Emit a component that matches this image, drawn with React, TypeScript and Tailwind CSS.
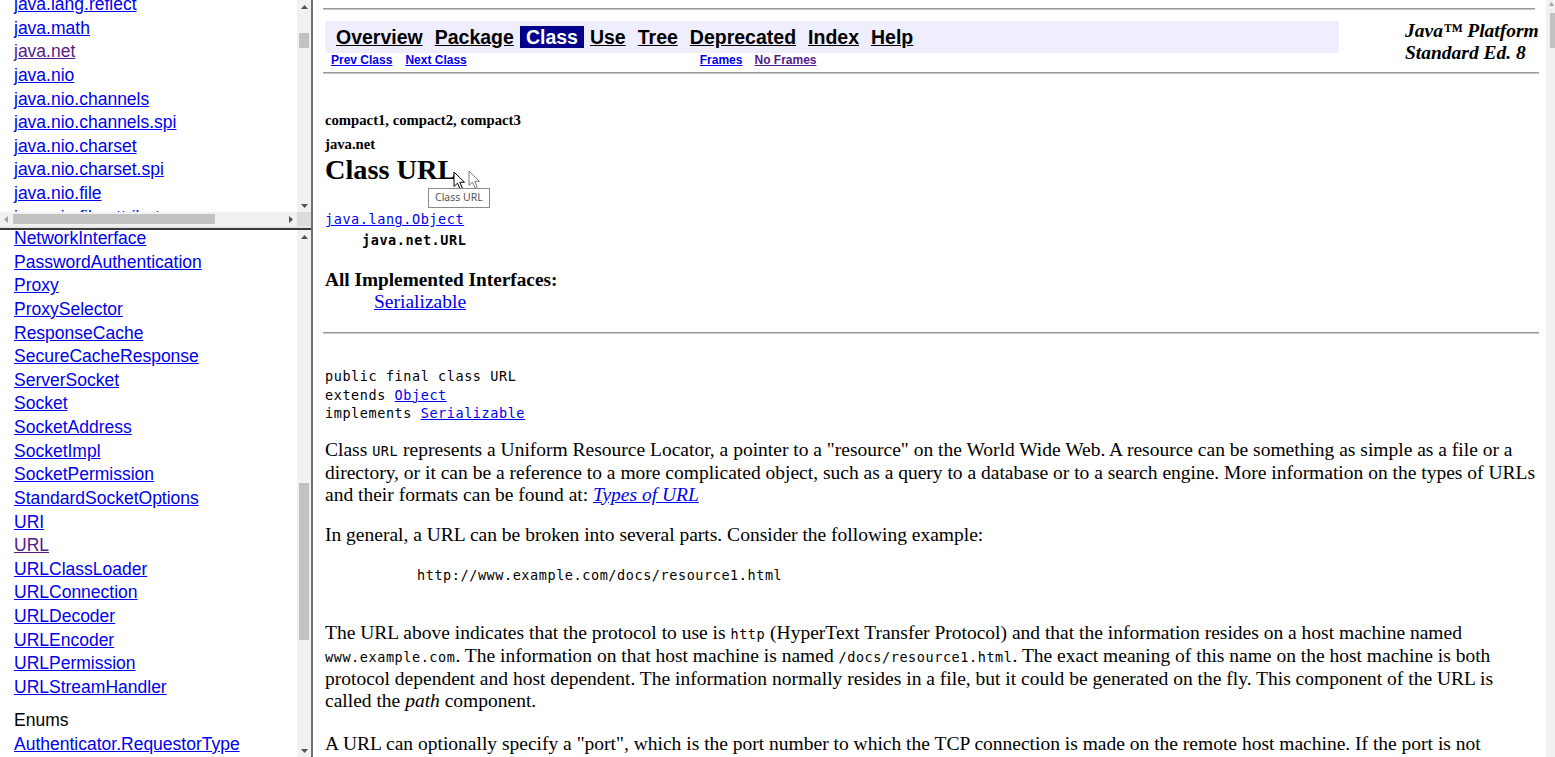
import React from "react";

const SANS = "font-['Liberation_Sans',Arial,sans-serif]";
const SERIF = "font-['Liberation_Serif','Times_New_Roman',serif]";
const MONO = "font-['DejaVu_Sans_Mono',monospace] text-[13.5px] tracking-[0.57px]";

function Tri({ dir, light }: { dir: "up" | "down" | "left" | "right"; light?: boolean }) {
  const fill = light ? "#a3a3a3" : "#505050";
  const pts: Record<string, string> = {
    up: "0,4 7,4 3.5,0",
    down: "0,0 7,0 3.5,4",
    left: "4,0 4,7 0,3.5",
    right: "0,0 0,7 4,3.5",
  };
  const vertical = dir === "up" || dir === "down";
  return (
    <svg width={vertical ? 7 : 4} height={vertical ? 4 : 7} viewBox={vertical ? "0 0 7 4" : "0 0 4 7"}>
      <polygon points={pts[dir]} fill={fill} />
    </svg>
  );
}

function VScroll({ thumbTop, thumbH }: { thumbTop: number; thumbH: number }) {
  return (
    <div className="relative flex h-full w-[14px] shrink-0 flex-col bg-[#f1f1f1]">
      <div className="flex h-[13px] items-center justify-center">
        <Tri dir="up" />
      </div>
      <div className="flex-1" />
      <div className="flex h-[13px] items-center justify-center">
        <Tri dir="down" />
      </div>
      <div
        className="absolute left-[2px] w-[10px] bg-[#c1c1c1]"
        style={{ top: thumbTop, height: thumbH }}
      />
    </div>
  );
}

const topPkgs: { t: string; v?: boolean }[] = [
  { t: "java.lang.reflect" },
  { t: "java.math" },
  { t: "java.net", v: true },
  { t: "java.nio" },
  { t: "java.nio.channels" },
  { t: "java.nio.channels.spi" },
  { t: "java.nio.charset" },
  { t: "java.nio.charset.spi" },
  { t: "java.nio.file" },
  { t: "java.nio.file.attribute" },
];

const classes: { t: string; v?: boolean }[] = [
  { t: "NetworkInterface" },
  { t: "PasswordAuthentication" },
  { t: "Proxy" },
  { t: "ProxySelector" },
  { t: "ResponseCache" },
  { t: "SecureCacheResponse" },
  { t: "ServerSocket" },
  { t: "Socket" },
  { t: "SocketAddress" },
  { t: "SocketImpl" },
  { t: "SocketPermission" },
  { t: "StandardSocketOptions" },
  { t: "URI" },
  { t: "URL", v: true },
  { t: "URLClassLoader" },
  { t: "URLConnection" },
  { t: "URLDecoder" },
  { t: "URLEncoder" },
  { t: "URLPermission" },
  { t: "URLStreamHandler" },
];

function LeftLink({ t, v }: { t: string; v?: boolean }) {
  return (
    <div className="h-[23.63px] whitespace-nowrap leading-[23.63px]">
      <a className={`underline ${v ? "text-[#551a8b]" : "text-[#0000ee]"}`}>{t}</a>
    </div>
  );
}

function Cursor({ ghost }: { ghost?: boolean }) {
  return (
    <svg width="13" height="19" viewBox="0 0 13 19">
      <path
        d="M1 1 L1 15.5 L4.5 12.2 L7 17.8 L9.2 16.8 L6.8 11.3 L11.5 11.3 Z"
        fill="#fff"
        stroke={ghost ? "#7a7a7a" : "#000"}
        strokeWidth="1"
        strokeLinejoin="round"
      />
    </svg>
  );
}

export default function App() {
  const navItems = ["Overview", "Package", "Class", "Use", "Tree", "Deprecated", "Index", "Help"];
  return (
    <div className="flex h-[757px] w-[1555px] overflow-hidden bg-white text-black">
      {/* Left frames */}
      <div className={`flex w-[311px] shrink-0 flex-col ${SANS} text-[17.5px]`}>
        <div className="flex h-[212px]">
          <div className="flex-1 overflow-hidden pl-[14px]">
            <div className="-mt-[7px]">
              {topPkgs.map((p) => (
                <LeftLink key={p.t} t={p.t} v={p.v} />
              ))}
            </div>
          </div>
          <VScroll thumbTop={33} thumbH={15} />
        </div>
        <div className="flex h-[14px]">
          <div className="relative flex flex-1 items-center justify-between bg-[#f1f1f1] px-[4px]">
            <Tri dir="left" light />
            <Tri dir="right" />
            <div className="absolute left-[13px] top-[2px] h-[10px] w-[202px] bg-[#c1c1c1]" />
          </div>
          <div className="w-[14px] bg-[#dcdcdc]" />
        </div>
        <div className="h-[2px] bg-[#e6e6e6]" />
        <div className="h-[2px] bg-[#3a3a3a]" />
        <div className="flex min-h-0 flex-1">
          <div className="flex-1 overflow-hidden pl-[14px]">
            <div className="-mt-[3px]">
              {classes.map((p) => (
                <LeftLink key={p.t} t={p.t} v={p.v} />
              ))}
              <div className="mt-[9.4px] h-[23.63px] leading-[23.63px] text-black">Enums</div>
              <LeftLink t="Authenticator.RequestorType" />
            </div>
          </div>
          <VScroll thumbTop={253} thumbH={157} />
        </div>
      </div>
      <div className="w-[2px] shrink-0 bg-[#707070]" />

      {/* Right frame */}
      <div className="relative flex min-w-0 flex-1">
        <div className="min-w-0 flex-1 overflow-hidden pl-[12px] pr-[6px]">
          <div className="mt-[8px] h-[2px] w-[1212px] -ml-[2px] border-t border-[#9a9a9a] bg-[#c8c8c8]" />
          {/* header */}
          <div className="flex">
            <div className="w-[1014px]">
              <div className={`mt-[11px] flex h-[32px] items-center bg-[#eeeeff] pl-[5px] ${SANS} text-[19.5px] font-bold`}>
                {navItems.map((n) => (
                  <span
                    key={n}
                    className={`flex h-[22px] items-center px-[6px] leading-[22px] ${
                      n === "Class" ? "bg-[#00008b] text-white" : "text-black underline"
                    }`}
                  >
                    {n}
                  </span>
                ))}
              </div>
              <div className={`flex h-[14px] items-center pl-[6px] ${SANS} text-[12px] font-bold leading-[14px]`}>
                <a className="text-[#0000ee] underline">Prev Class</a>
                <a className="ml-[13px] text-[#0000ee] underline">Next Class</a>
                <a className="ml-[233px] text-[#0000ee] underline">Frames</a>
                <a className="ml-[12px] text-[#551a8b] underline">No Frames</a>
              </div>
            </div>
            <div className={`ml-[66px] mt-[10px] whitespace-nowrap ${SERIF} text-[19.5px] font-bold italic leading-[22px]`}>
              <div>Java™ Platform</div>
              <div>Standard Ed. 8</div>
            </div>
          </div>
          <div className="mt-[5px] h-[2px] w-[1216px] -ml-[2px] border-t border-[#9a9a9a] bg-[#c8c8c8]" />

          <div className={`${SERIF} text-black`}>
            <div className="mt-[38px] text-[14.7px] font-bold leading-[16px]">compact1, compact2, compact3</div>
            <div className="mt-[8px] text-[14.7px] font-bold leading-[16px]">java.net</div>
            <h2 className="mt-[2px] text-[28.3px] font-bold leading-[32px]">Class URL</h2>

            <div className={`mt-[23px] leading-[21px] ${MONO}`}>
              <a className="text-[#0000ee] underline">java.lang.Object</a>
            </div>
            <div className={`pl-[37px] font-bold leading-[21px] ${MONO}`}>java.net.URL</div>

            <div className="mt-[18px] text-[19.3px] font-bold leading-[22px]">All Implemented Interfaces:</div>
            <div className="pl-[49px] text-[19.5px] leading-[22px]">
              <a className="text-[#0000ee] underline">Serializable</a>
            </div>

            <div className="mt-[19px] h-[2px] w-[1216px] -ml-[2px] border-t border-[#9a9a9a] bg-[#c8c8c8]" />

            <div className={`mt-[33px] leading-[18.5px] ${MONO}`}>
              <div>public final class URL</div>
              <div>
                extends <a className="text-[#0000ee] underline">Object</a>
              </div>
              <div>
                implements <a className="text-[#0000ee] underline">Serializable</a>
              </div>
            </div>

            <div className="w-[1215px] text-[19.5px] leading-[22px]">
              <p className="mt-[16px]">
                Class <code className={MONO}>URL</code> represents a Uniform Resource Locator, a pointer to a
                "resource" on the World Wide Web. A resource can be something as simple as a file or a directory,
                or it can be a reference to a more complicated object, such as a query to a database or to a
                search engine. More information on the types of URLs and their formats can be found at:{" "}
                <a className="text-[#0000ee] italic underline">Types of URL</a>
              </p>
              <p className="mt-[18px]">
                In general, a URL can be broken into several parts. Consider the following example:
              </p>
              <div className={`ml-[92px] mt-[20px] leading-[18px] ${MONO}`}>
                http://www.example.com/docs/resource1.html
              </div>
              <p className="mt-[38px]">
                The URL above indicates that the protocol to use is <code className={MONO}>http</code> (HyperText
                Transfer Protocol) and that the information resides on a host machine named{" "}
                <code className={MONO}>www.example.com</code>. The information on that host machine is named{" "}
                <code className={MONO}>/docs/resource1.html</code>. The exact meaning of this name on the host
                machine is both protocol dependent and host dependent. The information normally resides in a file,
                but it could be generated on the fly. This component of the URL is called the <i>path</i>{" "}
                component.
              </p>
              <p className="mt-[21px]">
                A URL can optionally specify a "port", which is the port number to which the TCP connection is made
                on the remote host machine. If the port is not specified, the default port for the protocol is used
                instead. For example, the default port for <code className={MONO}>http</code> is{" "}
                <code className={MONO}>80</code>. An alternative port could be specified as:
              </p>
            </div>
          </div>
        </div>

        {/* right scrollbar */}
        <div className="relative w-[9px] shrink-0 bg-[#f1f1f1]">
          <div className="absolute left-[3px] top-[2px]">
            <svg width="5" height="4" viewBox="0 0 5 4">
              <polygon points="0,4 5,4 2.5,0" fill="#a3a3a3" />
            </svg>
          </div>
          <div className="absolute left-[4px] top-[13px] h-[35px] w-[5px] bg-[#c1c1c1]" />
        </div>

        {/* tooltip and cursors */}
        <div className="absolute left-[140px] top-[171px]">
          <Cursor />
        </div>
        <div className="absolute left-[155px] top-[170px]">
          <Cursor ghost />
        </div>
        <div className="absolute left-[115px] top-[188px] flex h-[20px] items-center border border-[#8a8a8a] bg-white px-[6px] font-['Noto_Sans',sans-serif] text-[10.5px] text-[#555]">
          Class URL
        </div>
      </div>
    </div>
  );
}
